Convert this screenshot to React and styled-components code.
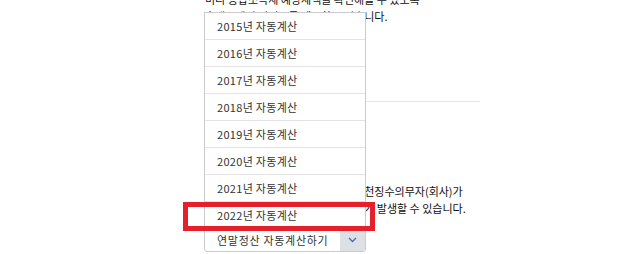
import React from "react";
import styled, { createGlobalStyle } from "styled-components";

const GlobalStyle = createGlobalStyle`
html, body {
  margin: 0;
  padding: 0;
  background: #ffffff;
  overflow: hidden;
}
body {
  font-family: "Noto Sans CJK KR", "Liberation Sans", sans-serif;
  color: #111111;
}
`

const Page = styled.div`
width: 275px;
height: 254px;
padding-left: 205px;
display: flex;
flex-direction: column;
`

const Paragraph = styled.p`
margin: ${props => props.$top || 0}px 0 0 0;
font-size: 11px;
line-height: 17px;
white-space: nowrap;
`

const Divider = styled.hr`
width: 100%;
margin: ${props => props.$top || 0}px 0 0 0;
border: 0;
border-top: 1px solid #e6e6e6;
`

const SelectWrap = styled.div`
position: relative;
width: 162px;
margin: ${props => props.$top || 0}px 0 0 -1px;
`

const SelectBox = styled.div`
display: flex;
height: 22px;
border: 1px solid #cbcbcb;
border-radius: 0 0 3px 3px;
background: #ffffff;
overflow: hidden;
`

const SelectText = styled.span`
flex: 1;
padding-left: 12px;
font-size: 11px;
letter-spacing: 0.7px;
line-height: 22px;
color: #333333;
`

const ArrowButton = styled.span`
width: 25px;
display: flex;
align-items: center;
justify-content: center;
background: #dde1e6;
`

const OptionList = styled.ul`
position: absolute;
left: 0;
right: 0;
bottom: calc(100% - 1px);
margin: 0;
padding: 0;
list-style: none;
background: #ffffff;
border: 1px solid #cbcbcb;
border-bottom: 0;
`

const Option = styled.li`
position: relative;
height: 26px;
padding-left: 12px;
border-bottom: 1px solid #e3e3e3;
font-size: 11px;
letter-spacing: 0.3px;
line-height: 26px;
color: #333333;
z-index: ${props => (props.$marked ? 2 : 1)};

&::after {
  content: "";
  display: ${props => (props.$marked ? "block" : "none")};
  position: absolute;
  top: 0;
  left: -22px;
  right: -10px;
  bottom: -3px;
  border: 5px solid #e5202a;
}
`

const years = [2015, 2016, 2017, 2018, 2019, 2020, 2021, 2022]

export default function App() {
  return (
    <>
      <GlobalStyle />
      <Page>
        <Paragraph $top={-9}>미리 종합소득세 예상세액을 확인해볼 수 있도록</Paragraph>
        <Paragraph>홈택스에서 서비스를 제공하고 있습니다.</Paragraph>
        <Divider $top={76} />
        <Paragraph $top={81}>연말정산 결과의 추가납부세액은 원천징수의무자(회사)가</Paragraph>
        <Paragraph>급여에서 공제하므로 실제값과 차이가 발생할 수 있습니다.</Paragraph>
        <SelectWrap $top={11}>
          <OptionList>
            {years.map(year => (
              <Option key={year} $marked={year === 2022}>
                {year}년 자동계산
              </Option>
            ))}
          </OptionList>
          <SelectBox>
            <SelectText>연말정산 자동계산하기</SelectText>
            <ArrowButton>
              <svg width="9" height="6" viewBox="0 0 9 6">
                <polyline points="1,1 4.5,4.5 8,1" fill="none" stroke="#3d6fb6" strokeWidth="1.4" />
              </svg>
            </ArrowButton>
          </SelectBox>
        </SelectWrap>
      </Page>
    </>
  )
}
